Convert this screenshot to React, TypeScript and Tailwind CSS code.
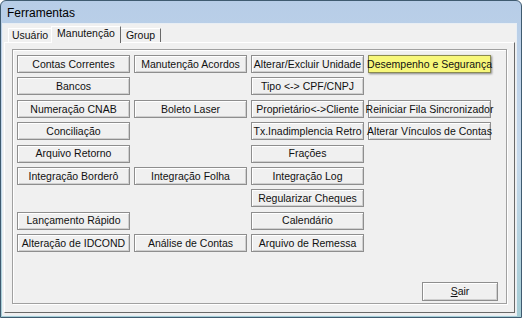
import React from "react";

type Btn = { label: string; col: string; row: string; hot?: boolean };

const buttons: Btn[] = [
  { label: "Contas Correntes", col: "col-start-1", row: "row-start-1" },
  { label: "Bancos", col: "col-start-1", row: "row-start-2" },
  { label: "Numeração CNAB", col: "col-start-1", row: "row-start-3" },
  { label: "Conciliação", col: "col-start-1", row: "row-start-4" },
  { label: "Arquivo Retorno", col: "col-start-1", row: "row-start-5" },
  { label: "Integração Borderô", col: "col-start-1", row: "row-start-6" },
  { label: "Lançamento Rápido", col: "col-start-1", row: "row-start-8" },
  { label: "Alteração de IDCOND", col: "col-start-1", row: "row-start-9" },
  { label: "Manutenção Acordos", col: "col-start-2", row: "row-start-1" },
  { label: "Boleto Laser", col: "col-start-2", row: "row-start-3" },
  { label: "Integração Folha", col: "col-start-2", row: "row-start-6" },
  { label: "Análise de Contas", col: "col-start-2", row: "row-start-9" },
  { label: "Alterar/Excluir Unidade", col: "col-start-3", row: "row-start-1" },
  { label: "Tipo <-> CPF/CNPJ", col: "col-start-3", row: "row-start-2" },
  { label: "Proprietário<->Cliente", col: "col-start-3", row: "row-start-3" },
  { label: "Tx.Inadimplencia Retro", col: "col-start-3", row: "row-start-4" },
  { label: "Frações", col: "col-start-3", row: "row-start-5" },
  { label: "Integração Log", col: "col-start-3", row: "row-start-6" },
  { label: "Regularizar Cheques", col: "col-start-3", row: "row-start-7" },
  { label: "Calendário", col: "col-start-3", row: "row-start-8" },
  { label: "Arquivo de Remessa", col: "col-start-3", row: "row-start-9" },
  { label: "Desempenho e Segurança", col: "col-start-4", row: "row-start-1", hot: true },
  { label: "Reiniciar Fila Sincronizador", col: "col-start-4", row: "row-start-3" },
  { label: "Alterar Vínculos de Contas", col: "col-start-4", row: "row-start-4" },
];

function ToolButton({ label, col, row, hot }: Btn) {
  const look = hot
    ? "border-[#8a8a50] bg-[#f7f77a] shadow-[1px_1px_2px_rgba(0,0,0,0.45)]"
    : "border-[#8e8e8e] bg-[#f0f0f0] shadow-[inset_1px_1px_0_#ffffff,inset_-1px_-1px_0_#cfcfcf]";
  return (
    <button
      className={`${col} ${row} flex items-center justify-center whitespace-nowrap border text-[10.5px] leading-none text-[#111] ${look}`}
    >
      {label}
    </button>
  );
}

export default function App() {
  return (
    <div
      className="flex h-[318px] w-[522px] flex-col overflow-hidden rounded-t-[6px] border border-[#3f5b70] bg-gradient-to-b from-[#b7cde7] via-[#c6d9ec] to-[#a4ccd4]"
      style={{ fontFamily: '"Liberation Sans", Arial, sans-serif' }}
    >
      <div className="flex h-[23px] shrink-0 items-center pl-[6px] text-[12px] text-black">Ferramentas</div>

      <div className="mb-[2px] ml-[2px] mr-[5px] flex flex-1 flex-col bg-[#f0f0f0] px-px pb-[2px] pt-[2px] shadow-[0_0_0_1px_#e8eef4]">
        {/* tabs */}
        <div className="flex h-[16px] items-end pl-[4px] text-[10.5px] text-[#111]">
          <div className="flex h-[14px] w-[43px] items-center justify-center border-l border-t border-white">Usuário</div>
          <div className="relative z-10 -mb-px flex h-[17px] w-[70px] items-center justify-center border-l border-t border-r border-white border-r-[#696969] bg-[#f0f0f0] pb-[2px]">
            Manutenção
          </div>
          <div className="flex h-[14px] w-[40px] items-center justify-center border-r border-t border-[#f0f0f0] border-r-[#696969] border-t-white">
            Group
          </div>
        </div>

        {/* tab page */}
        <div className="flex flex-1 flex-col border border-white border-b-[#696969] border-r-[#696969] px-[7px] pb-[8px] pt-[6px]">
          <div className="flex flex-1 flex-col border border-[#a0a0a0] pl-[4px] pr-[8px] pt-[5px] pb-[2px] shadow-[inset_1px_1px_0_#ffffff,1px_1px_0_#ffffff]">
            <div className="grid auto-rows-[18px] grid-cols-[113px_113px_113px_123px] gap-x-[4px] gap-y-[4.4px]">
              {buttons.map((b) => (
                <ToolButton key={b.label} {...b} />
              ))}
            </div>
            <div className="flex-1" />
            <div className="flex justify-end">
              <button className="flex h-[19px] w-[76px] items-center justify-center border border-[#8e8e8e] bg-[#f0f0f0] text-[10.5px] text-[#111] shadow-[inset_1px_1px_0_#ffffff,inset_-1px_-1px_0_#cfcfcf]">
                <span className="underline underline-offset-1">S</span>air
              </button>
            </div>
          </div>
        </div>
      </div>
    </div>
  );
}
